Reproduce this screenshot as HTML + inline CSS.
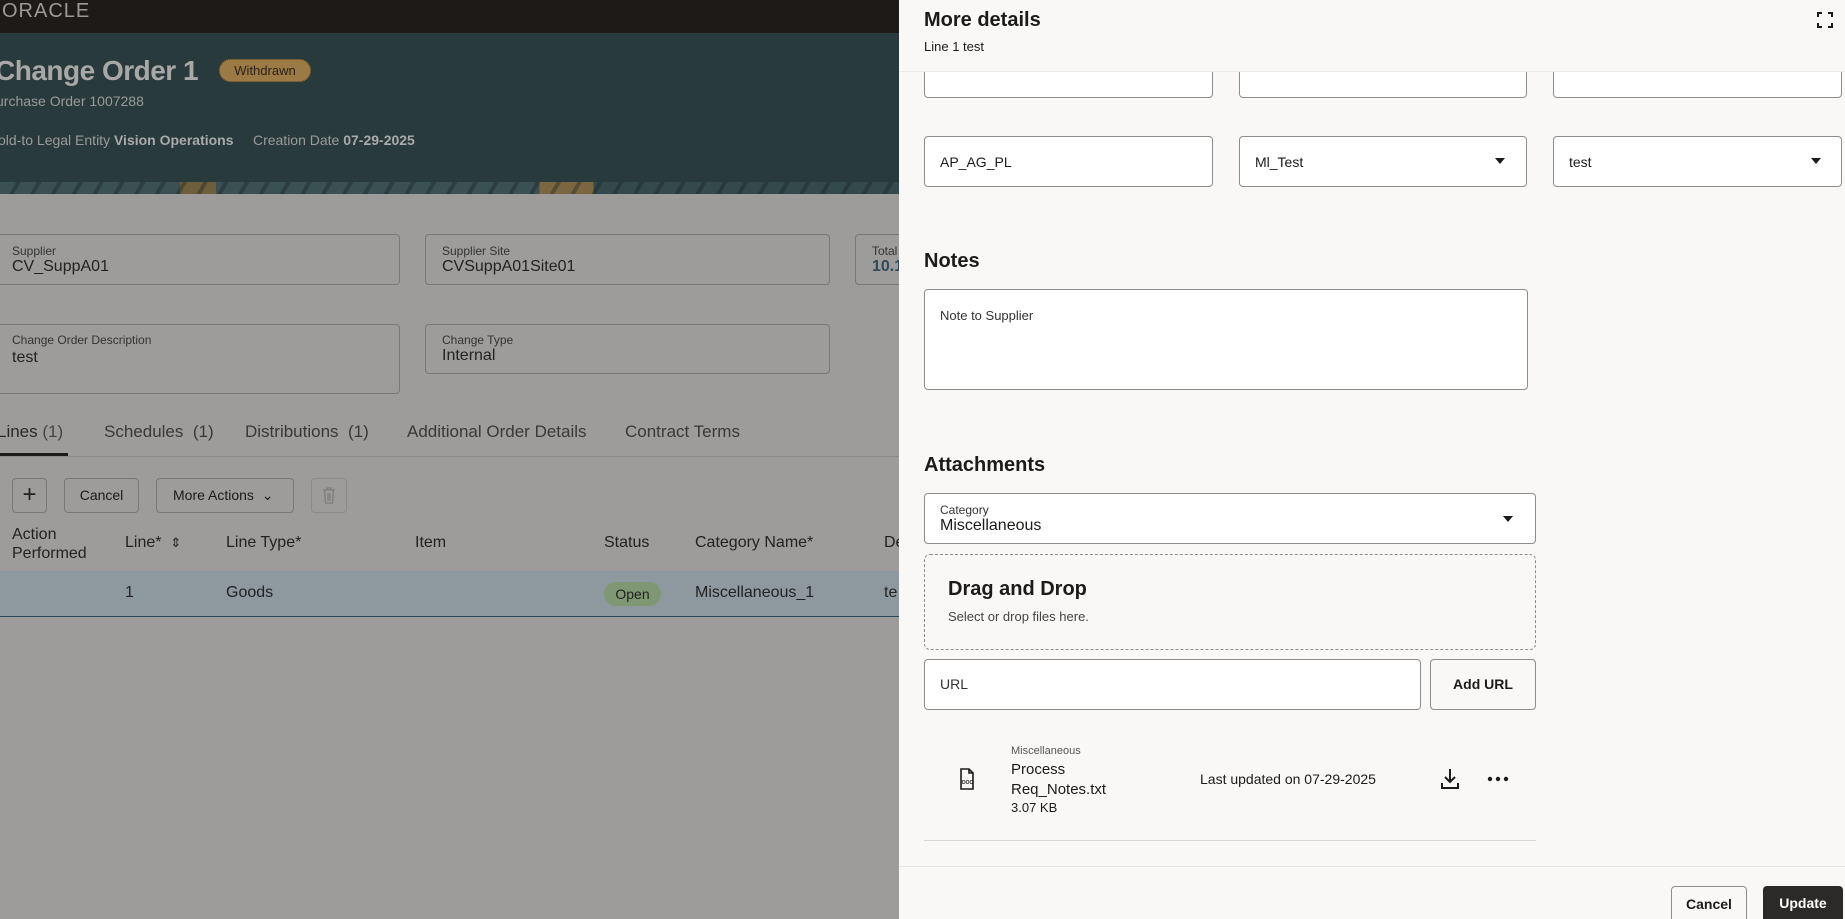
<!DOCTYPE html>
<html><head><meta charset="utf-8"><style>
*{box-sizing:border-box;margin:0;padding:0}
html,body{width:1845px;height:919px;overflow:hidden}
body{font-family:"Liberation Sans",sans-serif;background:#9d9c9a;position:relative;color:#1c1b19}
.a{position:absolute;white-space:nowrap}
.box{position:absolute;border:1px solid #7a7875;border-radius:4px}
.inp{position:absolute;background:#fff;border:1px solid #8f8d8a;border-radius:4px}
.caret{position:absolute;width:0;height:0;border-left:5px solid transparent;border-right:5px solid transparent;border-top:6px solid #1c1b19}
</style></head><body>
<div class="a" style="left:0;top:0;width:899px;height:33px;background:#1d1a18"></div>
<div class="a" style="left:2px;top:0px;color:#9c9a97;font-size:20px;letter-spacing:1px">ORACLE</div>
<div class="a" style="left:0;top:33px;width:899px;height:149px;background:#283a3b"></div>
<div class="a" style="left:0;top:182px;width:899px;height:12px;background:linear-gradient(90deg,#3a5052 0 20%,#6e5e3c 20% 24%,#3a5052 24% 60%,#7a6640 60% 66%,#34494b 66% 100%)"></div>
<div class="a" style="left:0;top:182px;width:899px;height:12px;background:repeating-linear-gradient(120deg,rgba(60,85,87,0) 0 14px,rgba(20,30,32,.35) 14px 18px)"></div>
<div class="a" style="left:-5px;top:55px;font-size:28px;font-weight:bold;color:#a9a8a6;letter-spacing:-0.5px">Change Order 1</div>
<div class="a" style="left:219px;top:59px;width:92px;height:23px;border-radius:12px;background:#9c7a45;border:1px dotted #5a4420;font-size:13px;color:#2a2218;text-align:center;line-height:21px">Withdrawn</div>
<div class="a" style="left:-4px;top:93px;font-size:14px;color:#9b9a98">urchase Order 1007288</div>
<div class="a" style="left:-2px;top:132px;font-size:14px;color:#9b9a98">old-to Legal Entity <b style="color:#aaa">Vision Operations</b> &nbsp;&nbsp;&nbsp; Creation Date <b style="color:#aaa">07-29-2025</b></div>

<div class="box" style="left:-5px;top:234px;width:405px;height:51px"></div>
<div class="a" style="left:12px;top:244px;font-size:12px;color:#333">Supplier</div>
<div class="a" style="left:12px;top:258px;font-size:16px;color:#222">CV_SuppA01</div>
<div class="box" style="left:425px;top:234px;width:405px;height:51px"></div>
<div class="a" style="left:442px;top:244px;font-size:12px;color:#333">Supplier Site</div>
<div class="a" style="left:442px;top:258px;font-size:16px;color:#222">CVSuppA01Site01</div>
<div class="box" style="left:855px;top:234px;width:60px;height:51px"></div>
<div class="a" style="left:872px;top:244px;font-size:12px;color:#333">Total</div>
<div class="a" style="left:872px;top:258px;font-size:16px;color:#2d4a5c;font-weight:bold">10.1</div>
<div class="box" style="left:-5px;top:324px;width:405px;height:70px"></div>
<div class="a" style="left:12px;top:333px;font-size:12px;color:#333">Change Order Description</div>
<div class="a" style="left:12px;top:349px;font-size:16px;color:#222">test</div>
<div class="box" style="left:425px;top:324px;width:405px;height:50px"></div>
<div class="a" style="left:442px;top:333px;font-size:12px;color:#333">Change Type</div>
<div class="a" style="left:442px;top:347px;font-size:16px;color:#222">Internal</div>

<div class="a" style="left:-3px;top:422px;font-size:17px;color:#2a2927">Lines <span style="color:#444">(1)</span></div>
<div class="a" style="left:104px;top:422px;font-size:17px;color:#3a3937">Schedules &nbsp;(1)</div>
<div class="a" style="left:245px;top:422px;font-size:17px;color:#3a3937">Distributions &nbsp;(1)</div>
<div class="a" style="left:407px;top:422px;font-size:17px;color:#3a3937">Additional Order Details</div>
<div class="a" style="left:625px;top:422px;font-size:17px;color:#3a3937">Contract Terms</div>
<div class="a" style="left:0;top:456px;width:899px;height:1px;background:#8a8987"></div>
<div class="a" style="left:0;top:453px;width:68px;height:3px;background:#1c1b19"></div>

<div class="box" style="left:12px;top:478px;width:35px;height:35px;font-size:24px;text-align:center;line-height:31px;color:#222">+</div>
<div class="box" style="left:64px;top:478px;width:75px;height:35px;font-size:14px;text-align:center;line-height:33px">Cancel</div>
<div class="box" style="left:156px;top:478px;width:138px;height:35px;font-size:14px;line-height:33px;padding-left:16px">More Actions &nbsp;&#8964;</div>
<div class="box" style="left:311px;top:478px;width:36px;height:35px;border-color:#8c8b89"></div>
<svg class="a" style="left:321px;top:486px" width="16" height="18" viewBox="0 0 16 18" fill="none" stroke="#7d7c7a" stroke-width="1.3"><path d="M2 4h12M6 4V2h4v2M3.5 4l1 13h7l1-13M7 7v8M9 7v8"/></svg>

<div class="a" style="left:12px;top:525px;font-size:16px;line-height:19px;color:#222">Action<br>Performed</div>
<div class="a" style="left:125px;top:534px;font-size:16px;color:#222">Line* &nbsp;<span style="font-size:13px">&#8661;</span></div>
<div class="a" style="left:226px;top:534px;font-size:16px;color:#222">Line Type*</div>
<div class="a" style="left:415px;top:534px;font-size:16px;color:#222">Item</div>
<div class="a" style="left:604px;top:534px;font-size:16px;color:#222">Status</div>
<div class="a" style="left:695px;top:534px;font-size:16px;color:#222">Category Name*</div>
<div class="a" style="left:884px;top:534px;font-size:16px;color:#222">De</div>
<div class="a" style="left:0;top:571px;width:899px;height:46px;background:#8e999f;border-bottom:1px solid #2d4a5c"></div>
<div class="a" style="left:125px;top:584px;font-size:16px;color:#222">1</div>
<div class="a" style="left:226px;top:584px;font-size:16px;color:#222">Goods</div>
<div class="a" style="left:604px;top:582px;width:57px;height:24px;border-radius:12px;background:#7f9873;font-size:14px;text-align:center;line-height:24px;color:#222">Open</div>
<div class="a" style="left:695px;top:584px;font-size:16px;color:#222">Miscellaneous_1</div>
<div class="a" style="left:884px;top:584px;font-size:16px;color:#222">te</div>

<div class="a" style="left:899px;top:0;width:946px;height:919px;background:#f9f8f6"></div>
<div class="inp" style="left:924px;top:50px;width:289px;height:48px"></div>
<div class="inp" style="left:1239px;top:50px;width:288px;height:48px"></div>
<div class="inp" style="left:1553px;top:50px;width:289px;height:48px"></div>
<div class="a" style="left:899px;top:0;width:946px;height:72px;background:#f9f8f6;border-bottom:1px solid #eceae7"></div>
<div class="a" style="left:924px;top:9px;font-size:20px;font-weight:bold">More details</div>
<div class="a" style="left:924px;top:39px;font-size:13px">Line 1 test</div>
<svg class="a" style="left:1817px;top:12px" width="16" height="16" viewBox="0 0 16 16" fill="none" stroke="#1c1b19" stroke-width="2"><path d="M1 5V1h4M11 1h4v4M15 11v4h-4M5 15H1v-4"/></svg>

<div class="inp" style="left:924px;top:136px;width:289px;height:51px"></div>
<div class="a" style="left:940px;top:154px;font-size:14px">AP_AG_PL</div>
<div class="inp" style="left:1239px;top:136px;width:288px;height:51px"></div>
<div class="a" style="left:1255px;top:154px;font-size:14px">Ml_Test</div>
<div class="caret" style="left:1495px;top:158px"></div>
<div class="inp" style="left:1553px;top:136px;width:289px;height:51px"></div>
<div class="a" style="left:1569px;top:154px;font-size:14px">test</div>
<div class="caret" style="left:1811px;top:158px"></div>

<div class="a" style="left:924px;top:250px;font-size:20px;font-weight:bold">Notes</div>
<div class="inp" style="left:924px;top:289px;width:604px;height:101px"></div>
<div class="a" style="left:940px;top:308px;font-size:13px;color:#333">Note to Supplier</div>

<div class="a" style="left:924px;top:454px;font-size:20px;font-weight:bold">Attachments</div>
<div class="inp" style="left:924px;top:493px;width:612px;height:51px"></div>
<div class="a" style="left:940px;top:503px;font-size:12px;color:#333">Category</div>
<div class="a" style="left:940px;top:517px;font-size:16px">Miscellaneous</div>
<div class="caret" style="left:1503px;top:516px"></div>
<div class="a" style="left:924px;top:554px;width:612px;height:96px;border:1px dashed #8f8d8a;border-radius:6px"></div>
<div class="a" style="left:948px;top:578px;font-size:20px;font-weight:bold">Drag and Drop</div>
<div class="a" style="left:948px;top:609px;font-size:13px;color:#444">Select or drop files here.</div>
<div class="inp" style="left:924px;top:659px;width:497px;height:51px"></div>
<div class="a" style="left:940px;top:676px;font-size:14px;color:#333">URL</div>
<div class="a" style="left:1430px;top:659px;width:106px;height:51px;border:1px solid #8f8d8a;border-radius:4px;font-size:14px;font-weight:bold;text-align:center;line-height:49px">Add URL</div>

<svg class="a" style="left:959px;top:768px" width="16" height="22" viewBox="0 0 16 22" fill="none" stroke="#1c1b19" stroke-width="1.6"><path d="M2 1h8l4 4v16H2z M10 1v4h4"/><text x="3" y="16" font-size="5" font-weight="bold" fill="#1c1b19" stroke="none" font-family="Liberation Sans">DOC</text></svg>
<div class="a" style="left:1011px;top:745px;font-size:11px;color:#555">Miscellaneous</div>
<div class="a" style="left:1011px;top:760px;font-size:15px;line-height:20px">Process<br>Req_Notes.txt</div>
<div class="a" style="left:1011px;top:800px;font-size:13px">3.07 KB</div>
<div class="a" style="left:1200px;top:771px;font-size:14px">Last updated on 07-29-2025</div>
<svg class="a" style="left:1440px;top:768px" width="20" height="22" viewBox="0 0 20 22" fill="none" stroke="#1c1b19" stroke-width="2"><path d="M10 1v13M5 9l5 5 5-5M2 15v5h16v-5"/></svg>
<svg class="a" style="left:1487px;top:776px" width="22" height="6" viewBox="0 0 22 6" fill="#1c1b19"><circle cx="3" cy="3" r="2.2"/><circle cx="11" cy="3" r="2.2"/><circle cx="19" cy="3" r="2.2"/></svg>
<div class="a" style="left:924px;top:840px;width:612px;height:1px;background:#d9d7d4"></div>
<div class="a" style="left:899px;top:866px;width:946px;height:1px;background:#e8e6e3"></div>
<div class="a" style="left:1671px;top:886px;width:76px;height:40px;border:1px solid #8f8d8a;border-radius:4px;font-size:14px;font-weight:bold;text-align:center;line-height:34px">Cancel</div>
<div class="a" style="left:1763px;top:886px;width:80px;height:40px;background:#2b2a28;border-radius:4px;color:#fff;font-size:14px;font-weight:bold;text-align:center;line-height:34px">Update</div>
</body></html>
